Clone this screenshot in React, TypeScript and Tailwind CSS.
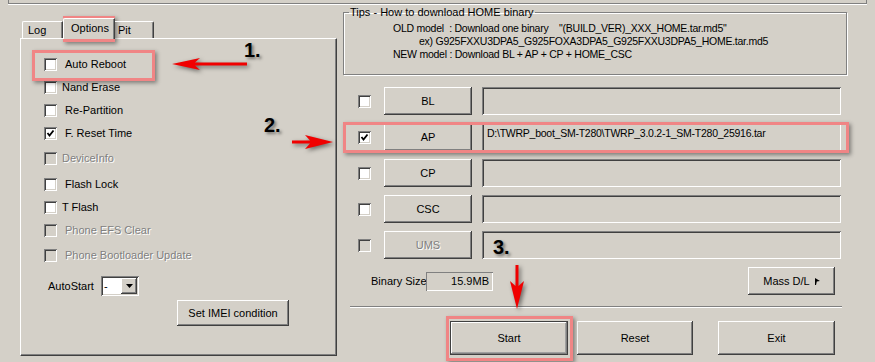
import React from 'react';

const raised =
  'bg-[#d4d0c8] shadow-[inset_-1px_-1px_#404040,inset_1px_1px_#ffffff,inset_-2px_-2px_#808080,inset_2px_2px_#d4d0c8]';
const sunken =
  'shadow-[inset_1px_1px_#808080,inset_-1px_-1px_#ffffff,inset_2px_2px_#404040,inset_-2px_-2px_#d4d0c8]';
const disabledText = 'text-[#808080] [text-shadow:1px_1px_0_#ffffff]';
const highlight =
  'absolute border-[3px] border-[#f08585] shadow-[2px_2px_4px_rgba(0,0,0,0.4)] pointer-events-none';
const stepNumber =
  'absolute text-[20px] leading-[20px] font-bold [text-shadow:2px_2px_3px_rgba(0,0,0,0.45)]';

function CheckBox({ checked = false, disabled = false }: { checked?: boolean; disabled?: boolean }) {
  return (
    <div
      className={`w-[13px] h-[13px] shrink-0 flex items-center justify-center ${sunken} ${
        disabled ? 'bg-[#d4d0c8]' : 'bg-white'
      }`}
    >
      {checked && (
        <svg width="9" height="9" viewBox="0 0 9 9">
          <polyline points="1.5,4 3.5,6.5 7.5,1.5" fill="none" stroke="#000" strokeWidth="1.8" />
        </svg>
      )}
    </div>
  );
}

const options = [
  { label: 'Auto Reboot', gap: 'ml-[8px]', mt: '' },
  { label: 'Nand Erase', gap: 'ml-[5px]', mt: 'mt-[9px]' },
  { label: 'Re-Partition', gap: 'ml-[8px]', mt: 'mt-[9px]' },
  { label: 'F. Reset Time', gap: 'ml-[8px]', mt: 'mt-[9px]', checked: true },
  { label: 'DeviceInfo', gap: 'ml-[5px]', mt: 'mt-[11px]', disabled: true },
  { label: 'Flash Lock', gap: 'ml-[8px]', mt: 'mt-[12px]' },
  { label: 'T Flash', gap: 'ml-[5px]', mt: 'mt-[9px]' },
  { label: 'Phone EFS Clear', gap: 'ml-[8px]', mt: 'mt-[9px]', disabled: true },
  { label: 'Phone Bootloader Update', gap: 'ml-[8px]', mt: 'mt-[11px]', disabled: true },
];

const files = [
  { name: 'BL', path: '' },
  { name: 'AP', path: 'D:\\TWRP_boot_SM-T280\\TWRP_3.0.2-1_SM-T280_25916.tar', checked: true },
  { name: 'CP', path: '' },
  { name: 'CSC', path: '' },
  { name: 'UMS', path: '', disabled: true },
];

function OptionsPanel() {
  return (
    <div className="ml-[20px] mt-[12px] w-[317px]">
      <div className="flex items-end h-[22px] pl-[2px] relative z-10">
        <div className="w-[41px] h-[17px] flex items-center pl-[5px] border-t border-l border-white rounded-tl-[2px] shadow-[inset_-1px_0_#808080] border-r border-r-[#404040]">
          Log
        </div>
        <div className="w-[52px] h-[21px] -mb-[1px] pb-[1px] flex items-center pl-[7px] bg-[#d4d0c8] border-t border-l border-white rounded-tl-[2px] shadow-[inset_-1px_0_#808080] border-r border-r-[#404040]">
          Options
        </div>
        <div className="w-[39px] h-[17px] flex items-center pl-[3px] border-t border-white shadow-[inset_-1px_0_#808080] border-r border-r-[#404040] rounded-tr-[2px]">
          Pit
        </div>
      </div>
      <div className="h-[318px] border-l border-t border-white border-r border-b border-r-[#404040] border-b-[#404040] shadow-[inset_-1px_-1px_#808080] pl-[23px] pt-[18px]">
        {options.map((o) => (
          <div key={o.label} className={`flex items-center h-[14px] ${o.mt}`}>
            <CheckBox checked={o.checked} disabled={o.disabled} />
            <span className={`${o.gap} whitespace-nowrap ${o.disabled ? disabledText : ''}`}>{o.label}</span>
          </div>
        ))}
        <div className="flex items-center h-[20px] mt-[14px] pl-[4px]">
          <span className="w-[53px]">AutoStart</span>
          <div className={`w-[38px] h-[20px] bg-white ${sunken} flex items-center justify-between pl-[3px] pr-[2px]`}>
            <span>-</span>
            <div className={`w-[16px] h-[16px] ${raised} flex items-center justify-center`}>
              <svg width="7" height="4" viewBox="0 0 7 4">
                <polygon points="0,0 7,0 3.5,4" fill="#000" />
              </svg>
            </div>
          </div>
        </div>
        <div className={`mt-[4px] ml-[133px] w-[112px] h-[26px] ${raised} flex items-center justify-center`}>
          Set IMEI condition
        </div>
      </div>
    </div>
  );
}

function DownloadPanel() {
  return (
    <div className="flex-1">
      <fieldset className="ml-[6px] mt-[2px] w-[504px] border border-[#808080] shadow-[1px_1px_0_#ffffff,inset_1px_1px_0_#ffffff] pb-[13px]">
        <legend className="ml-[5px] px-[1px]">Tips - How to download HOME binary</legend>
        <div className="pt-[3px] whitespace-pre text-[10.5px] tracking-[-0.25px]">
          <div className="pl-[49px]">{'OLD model  : Download one binary    "(BUILD_VER)_XXX_HOME.tar.md5"'}</div>
          <div className="pl-[75px]">ex) G925FXXU3DPA5_G925FOXA3DPA5_G925FXXU3DPA5_HOME.tar.md5</div>
          <div className="pl-[49px]">NEW model : Download BL + AP + CP + HOME_CSC</div>
        </div>
      </fieldset>

      <div className="mt-[12px] flex flex-col gap-[8px]">
        {files.map((f) => (
          <div key={f.name} className="flex items-center h-[28px]">
            <div className="ml-[21px]">
              <CheckBox checked={f.checked} disabled={f.disabled} />
            </div>
            <div className={`ml-[13px] w-[88px] h-[28px] ${raised} flex items-center justify-center ${f.disabled ? disabledText : ''}`}>
              {f.name}
            </div>
            <div className={`ml-[10px] w-[359px] h-[28px] ${sunken} pl-[5px] pt-[4px] whitespace-nowrap text-[10.5px] tracking-[-0.25px]`}>
              {f.path}
            </div>
          </div>
        ))}
      </div>

      <div className="mt-[8px] flex items-center h-[28px]">
        <span className="ml-[34px] w-[55px] whitespace-nowrap">Binary Size</span>
        <div className="w-[67px] h-[19px] shadow-[inset_1px_1px_#808080,inset_-1px_-1px_#ffffff] flex items-center justify-end pr-[4px]">
          15.9MB
        </div>
        <div className={`ml-[255px] w-[87px] h-[28px] ${raised} flex items-center justify-center gap-[5px]`}>
          <span>Mass D/L</span>
          <svg width="5" height="7" viewBox="0 0 5 7">
            <polygon points="0,0 5,3 1.8,3.6 1,7 0,7" fill="#000" />
          </svg>
        </div>
      </div>

      <div className="mt-[11px] ml-[13px] w-[492px] h-[2px] border-t border-[#808080] border-b border-b-white" />

      <div className="mt-[13px] flex">
        <div className="ml-[113px] w-[118px] h-[34px] border border-[#404040] bg-[#d4d0c8] shadow-[inset_-1px_-1px_#808080,inset_1px_1px_#ffffff,inset_-2px_-2px_#a0a0a0] flex items-center justify-center">
          Start
        </div>
        <div className={`ml-[9px] w-[116px] h-[34px] ${raised} flex items-center justify-center`}>Reset</div>
        <div className={`ml-[25px] w-[117px] h-[34px] ${raised} flex items-center justify-center`}>Exit</div>
      </div>
    </div>
  );
}

export default function App() {
  return (
    <div className="relative w-[875px] h-[362px] overflow-hidden bg-[#d4d0c8] text-black text-[11px] leading-[13px] font-['Liberation_Sans',Arial,sans-serif]">
      <div className="mx-[8px] h-[4px] border-x border-b border-[#808080] shadow-[0_1px_0_#ffffff]" />
      <div className="flex">
        <OptionsPanel />
        <DownloadPanel />
      </div>

      {/* annotations drawn over the screenshot */}
      <div className={`${highlight} left-[63px] top-[16px] w-[52px] h-[26px]`} />
      <div className={`${highlight} left-[32px] top-[50px] w-[123px] h-[31px]`} />
      <div className={`${highlight} left-[343px] top-[122px] w-[506px] h-[31px]`} />
      <div className={`${highlight} left-[446px] top-[316px] w-[127px] h-[45px]`} />

      <div className={`${stepNumber} left-[244px] top-[40px]`}>1.</div>
      <div className={`${stepNumber} left-[264px] top-[115px]`}>2.</div>
      <div className={`${stepNumber} left-[493px] top-[237px]`}>3.</div>

      <svg
        className="absolute left-[170px] top-[55px] drop-shadow-[2px_2px_2px_rgba(0,0,0,0.5)]"
        width="80"
        height="20"
        viewBox="0 0 80 20"
      >
        <path d="M2 9 L30 3 L25 7.5 L77 7.5 L77 10.5 L25 10.5 L30 15 Z" fill="#f00000" />
      </svg>
      <svg
        className="absolute left-[290px] top-[133px] drop-shadow-[2px_2px_2px_rgba(0,0,0,0.5)]"
        width="46"
        height="20"
        viewBox="0 0 46 20"
      >
        <path d="M43 9 L15 2 L20 7.5 L2 7.5 L2 10.5 L20 10.5 L15 16 Z" fill="#f00000" />
      </svg>
      <svg
        className="absolute left-[508px] top-[264px] drop-shadow-[2px_2px_2px_rgba(0,0,0,0.5)]"
        width="20"
        height="48"
        viewBox="0 0 20 48"
      >
        <path d="M9 45 L2 17 L7.5 22 L7.5 1 L10.5 1 L10.5 22 L16 17 Z" fill="#f00000" />
      </svg>
    </div>
  );
}
